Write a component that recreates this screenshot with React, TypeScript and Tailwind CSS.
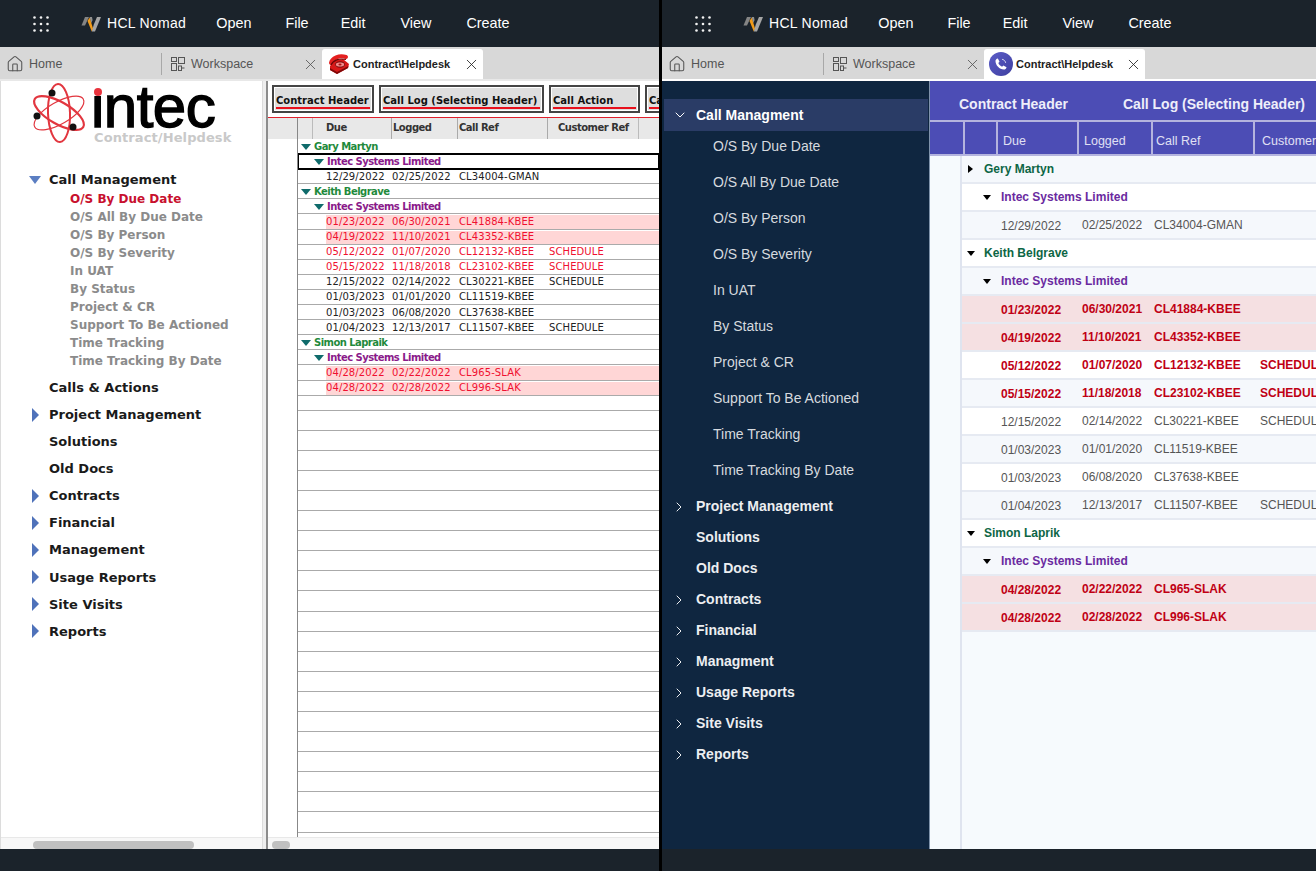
import React from 'react';
import { ChevronDown, ChevronRight, House, X } from 'lucide-react';

const leftItems = [
  { label: 'Call Management', open: true },
  { label: 'Calls & Actions' },
  { label: 'Project Management', arrow: true },
  { label: 'Solutions' },
  { label: 'Old Docs' },
  { label: 'Contracts', arrow: true },
  { label: 'Financial', arrow: true },
  { label: 'Management', arrow: true },
  { label: 'Usage Reports', arrow: true },
  { label: 'Site Visits', arrow: true },
  { label: 'Reports', arrow: true },
];

const subItems = [
  'O/S By Due Date',
  'O/S All By Due Date',
  'O/S By Person',
  'O/S By Severity',
  'In UAT',
  'By Status',
  'Project & CR',
  'Support To Be Actioned',
  'Time Tracking',
  'Time Tracking By Date',
];

const rightItems = [
  { label: 'Project Management', arrow: true },
  { label: 'Solutions' },
  { label: 'Old Docs' },
  { label: 'Contracts', arrow: true },
  { label: 'Financial', arrow: true },
  { label: 'Managment', arrow: true },
  { label: 'Usage Reports', arrow: true },
  { label: 'Site Visits', arrow: true },
  { label: 'Reports', arrow: true },
];

type Row = { kind: 'person' | 'company' | 'call'; text?: string; due?: string; logged?: string; ref?: string; cust?: string; red?: boolean; pink?: boolean };

const rows = (p1: string, p3: string): Row[] => [
  { kind: 'person', text: p1 },
  { kind: 'company', text: 'Intec Systems Limited' },
  { kind: 'call', due: '12/29/2022', logged: '02/25/2022', ref: 'CL34004-GMAN' },
  { kind: 'person', text: 'Keith Belgrave' },
  { kind: 'company', text: 'Intec Systems Limited' },
  { kind: 'call', due: '01/23/2022', logged: '06/30/2021', ref: 'CL41884-KBEE', red: true, pink: true },
  { kind: 'call', due: '04/19/2022', logged: '11/10/2021', ref: 'CL43352-KBEE', red: true, pink: true },
  { kind: 'call', due: '05/12/2022', logged: '01/07/2020', ref: 'CL12132-KBEE', cust: 'SCHEDULE', red: true },
  { kind: 'call', due: '05/15/2022', logged: '11/18/2018', ref: 'CL23102-KBEE', cust: 'SCHEDULE', red: true },
  { kind: 'call', due: '12/15/2022', logged: '02/14/2022', ref: 'CL30221-KBEE', cust: 'SCHEDULE' },
  { kind: 'call', due: '01/03/2023', logged: '01/01/2020', ref: 'CL11519-KBEE' },
  { kind: 'call', due: '01/03/2023', logged: '06/08/2020', ref: 'CL37638-KBEE' },
  { kind: 'call', due: '01/04/2023', logged: '12/13/2017', ref: 'CL11507-KBEE', cust: 'SCHEDULE' },
  { kind: 'person', text: p3 },
  { kind: 'company', text: 'Intec Systems Limited' },
  { kind: 'call', due: '04/28/2022', logged: '02/22/2022', ref: 'CL965-SLAK', red: true, pink: true },
  { kind: 'call', due: '04/28/2022', logged: '02/28/2022', ref: 'CL996-SLAK', red: true, pink: true },
];

const GridDots = () => (
  <svg width="16" height="16" viewBox="0 0 16 16" className="shrink-0" fill="#f2f2f2">
    {[1.5, 8, 14.5].flatMap((y) =>
      [1.5, 8, 14.5].map((x) => <circle key={`${x}-${y}`} cx={x} cy={y} r="1.3" />)
    )}
  </svg>
);

const NomadLogo = () => (
  <svg width="20" height="16" viewBox="0 0 20 16" className="shrink-0">
    <path d="M0.5 9.5 L4 1 H8 L4 9.5 Z" fill="#858585" />
    <path d="M8.6 1 H11 L11.6 4 L10 7.5 Z" fill="#8f8f8f" />
    <path d="M6.5 5 L8.6 1.5 L12.2 13 L10.8 15.5 Z" fill="#f29b18" />
    <path d="M10.8 15.5 H14 L20 1 H16 L12.8 8.5 Z" fill="#a5a5a5" />
  </svg>
);

const WorkspaceIcon = () => (
  <svg width="14" height="14" viewBox="0 0 14 14" fill="none" stroke="#555" strokeWidth="1" className="shrink-0">
    <rect x="0.5" y="0.5" width="5" height="4" />
    <rect x="7.5" y="0.5" width="6" height="6" />
    <rect x="0.5" y="6.5" width="5" height="7" />
    <rect x="7.5" y="9" width="3" height="4.5" />
    <path d="M10.5 11 H13.5" />
  </svg>
);

const TopBar = () => (
  <div className="flex h-[47px] shrink-0 items-center bg-[#1b232b] pl-[33px] text-[14.4px] text-white">
    <GridDots />
    <div className="ml-[32px] flex items-center gap-[6px]">
      <NomadLogo />
      <span className="text-[14px] tracking-[0.3px]">HCL Nomad</span>
    </div>
    <span className="ml-[30px]">Open</span>
    <span className="ml-[34px]">File</span>
    <span className="ml-[32px]">Edit</span>
    <span className="ml-[35px]">View</span>
    <span className="ml-[35px]">Create</span>
  </div>
);

const TabStrip = ({ icon, border }: { icon: React.ReactNode; border: string }) => (
  <div className={`flex h-[34px] shrink-0 items-start border-b-2 bg-[#d8d8d8] pt-[2px] text-[12.5px] text-[#555] ${border}`}>
    <div className="flex h-[30px] w-[161px] items-center gap-[5px] pl-[6px]">
      <House size={18} strokeWidth={1.4} />
      <span>Home</span>
    </div>
    <span className="mt-[4px] h-[22px] w-px bg-[#a8a8a8]" />
    <div className="flex h-[30px] w-[160px] items-center pl-[9px]">
      <WorkspaceIcon />
      <span className="ml-[6px]">Workspace</span>
      <X size={17} strokeWidth={1.2} className="ml-auto mr-[3px]" />
    </div>
    <div className="flex h-[30px] w-[161px] items-center rounded-t-[3px] bg-white pl-[4px] text-[11px] text-[#222]">
      {icon}
      <span className="ml-[3px] font-bold">Contract\Helpdesk</span>
      <X size={17} strokeWidth={1.2} className="ml-auto mr-[3px]" />
    </div>
  </div>
);

const RedPhone = () => (
  <svg width="24" height="22" viewBox="0 0 24 22" className="shrink-0">
    <path d="M4 13 L9 7 L17 6 L23 11 L22 15 L11 21 L4 17 Z" fill="#d81818" />
    <path d="M4 15 L11 19 L22.5 13 L22 15 L11 21 L4 17 Z" fill="#7d0808" />
    <path d="M5 10 C6 5 13 2 20 4" fill="none" stroke="#e42020" strokeWidth="4" strokeLinecap="round" />
    <path d="M5 12 C7 7 13 5 20 6.5" fill="none" stroke="#6a0606" strokeWidth="1.2" />
    <ellipse cx="14" cy="11.5" rx="4.5" ry="2.6" fill="#f48c8c" stroke="#6a0606" strokeWidth="0.9" />
    <ellipse cx="14" cy="11.5" rx="1.6" ry="0.9" fill="#b01010" />
  </svg>
);

const BluePhone = () => (
  <span className="ml-[1px] flex h-[24px] w-[24px] shrink-0 items-center justify-center rounded-full bg-gradient-to-br from-[#5b5cc8] to-[#3f40a0]">
    <svg width="14" height="14" viewBox="0 0 24 24" fill="white">
      <path d="M6.6 2.5 L9.5 8 L7.4 10.2 C8.5 12.8 11.2 15.5 13.8 16.6 L16 14.5 L21.5 17.4 C21 20 19 21.5 17 21.5 C9 21 3 15 2.5 7 C2.5 5 4 3 6.6 2.5 Z" />
      <path d="M14 4 C17 4.5 19.5 7 20 10" fill="none" stroke="white" strokeWidth="1.4" />
    </svg>
  </span>
);

const IntecLogo = () => (
  <div className="relative h-[66px] w-full">
    <svg width="56" height="62" viewBox="0 0 56 62" className="absolute left-[30px] top-[0px]">
      <g fill="none" stroke="#e2363f">
        <ellipse cx="28" cy="31" rx="28" ry="11" strokeWidth="2.2" transform="rotate(30 28 31)" />
        <ellipse cx="28" cy="31" rx="28" ry="11" strokeWidth="1.2" transform="rotate(-30 28 31)" />
        <ellipse cx="28" cy="31" rx="29" ry="11" strokeWidth="2" transform="rotate(88 28 31)" />
      </g>
      <circle cx="21" cy="11" r="3.5" fill="#111" />
      <circle cx="6" cy="34" r="3.5" fill="#111" />
      <circle cx="42" cy="45" r="3.5" fill="#111" />
    </svg>
    <span className="absolute left-[90px] top-[3px] font-['Liberation_Sans',sans-serif] text-[60px] leading-[44px] tracking-[-0.5px] text-black [-webkit-text-stroke:1.4px_black]">intec</span>
    <span className="absolute left-[91px] top-[1px] h-[13px] w-[12px] bg-white" />
    <span className="absolute left-[93px] top-[6px] h-[8px] w-[8px] rounded-full bg-[#e8323c]" />
    <span className="absolute left-[93px] top-[48px] font-['DejaVu_Sans',sans-serif] text-[13px] font-bold leading-[16px] tracking-[0.1px] text-[#c9c9c9]">Contract/Helpdesk</span>
  </div>
);

const LeftPane = () => (
  <div className="flex w-[659px] shrink-0 flex-col overflow-hidden font-['Liberation_Sans',sans-serif]">
    <TopBar />
    <TabStrip icon={<RedPhone />} border="border-[#e8e8e8]" />
    <div className="flex min-h-0 flex-1 bg-white font-['DejaVu_Sans',sans-serif]">
      <div className="flex w-[263px] shrink-0 flex-col border-x border-[#dcdcdc]">
        <div className="flex-1 pt-[1px]">
          <IntecLogo />
          <div className="mt-[18px] pl-[28px]">
            {leftItems.map((it) => (
              <div key={it.label}>
                <div className="flex h-[27.1px] items-center text-[13px] font-bold text-[#1a1a1a]">
                  <span className="flex w-[20px] items-center">
                    {it.open && <span className="h-0 w-0 border-x-[6px] border-t-[8px] border-x-transparent border-t-[#5b7ec2]" />}
                    {it.arrow && <span className="ml-[3px] h-0 w-0 border-y-[7px] border-l-[7px] border-y-transparent border-l-[#4f72ba]" />}
                  </span>
                  <span>{it.label}</span>
                </div>
                {it.open && (
                  <div className="mt-[-3px] mb-[4px] pl-[41px]">
                    {subItems.map((s, i) => (
                      <div key={s} className={`flex h-[18px] items-center text-[12px] font-bold ${i === 0 ? 'text-[#c8102e]' : 'text-[#8b8b8b]'}`}>{s}</div>
                    ))}
                  </div>
                )}
              </div>
            ))}
          </div>
        </div>
        <div className="h-[12px] shrink-0 border-t border-[#e8e8e8] bg-[#f7f7f7] pl-[32px]">
          <div className="mt-[3px] h-[8px] w-[161px] rounded-full bg-[#c0c0c0]" />
        </div>
      </div>
      <div className="w-[5px] shrink-0 border-r-2 border-[#8c8c8c] bg-[#eeeeee]" />
      <div className="flex min-w-0 flex-1 flex-col overflow-hidden">
        <div className="flex h-[37px] shrink-0 items-start gap-[5px] border-b border-[#e0202c] pl-[4px] pt-[4px]">
          {[
            ['Contract Header', 'w-[102px]'],
            ['Call Log (Selecting Header)', 'w-[165px]'],
            ['Call Action', 'w-[91px]'],
            ['Call', 'w-[40px]'],
          ].map(([t, w]) => (
            <div key={t} className={`flex h-[28px] shrink-0 flex-col overflow-hidden border-2 border-[#444] bg-[#dedede] px-[2px] pt-[8px] text-[10px] font-bold leading-[12px] text-[#111] shadow-[inset_0_0_0_1px_#fff] ${w}`}>
              <span className="whitespace-nowrap">{t}</span>
              <span className="h-[2px] w-full shrink-0 bg-[#e8101c]" />
            </div>
          ))}
        </div>
        <div className="flex h-[21px] shrink-0 items-center bg-[#e8e8e8] text-[10px] font-bold tracking-[-0.5px] text-[#333]">
          <span className="h-full w-[30px] shrink-0 border-r border-[#888]" />
          <span className="h-full w-[15px] shrink-0 border-r border-[#bbb]" />
          <span className="flex h-full w-[79px] shrink-0 items-center border-r border-[#aaa] pb-[2px] pl-[13px]">Due</span>
          <span className="flex h-full w-[66px] shrink-0 items-center border-r border-[#aaa] pb-[2px] pl-[1px]">Logged</span>
          <span className="flex h-full w-[90px] shrink-0 items-center border-r border-[#aaa] pb-[2px] pl-[1px]">Call Ref</span>
          <span className="flex h-full w-[91px] shrink-0 items-center border-r border-[#bbb] pb-[2px] pl-[10px]">Customer Ref</span>
        </div>
        <div className="flex min-h-0 flex-1">
          <div className="w-[30px] shrink-0 border-r border-[#888]" />
          <div className="min-w-0 flex-1 overflow-hidden">
            {rows('Gary Martyn', 'Simon Lapraik').map((r, i) => (
              <div key={i} className={`flex h-[15.1px] items-center whitespace-nowrap border-b border-[#aaaaaa] pt-[1px] text-[10px] leading-none ${i === 1 ? 'outline-2 -outline-offset-1 outline-black' : ''}`}>
                {r.kind === 'person' && (
                  <>
                    <span className="ml-[3px] h-0 w-0 border-x-[5px] border-t-[6px] border-x-transparent border-t-[#0f6b6b]" />
                    <span className="ml-[3px] font-bold tracking-[-0.55px] text-[#1f8a3c]">{r.text}</span>
                  </>
                )}
                {r.kind === 'company' && (
                  <>
                    <span className="ml-[16px] h-0 w-0 border-x-[5px] border-t-[6px] border-x-transparent border-t-[#0f6b6b]" />
                    <span className="ml-[3px] font-bold tracking-[-0.55px] text-[#8a1a8a]">{r.text}</span>
                  </>
                )}
                {r.kind === 'call' && (
                  <div className={`ml-[28px] flex h-full flex-1 items-center tracking-[0.1px] ${r.pink ? 'bg-[#ffd6d6]' : ''} ${r.red ? 'text-[#f01030]' : 'text-[#222]'}`}>
                    <span className="w-[66px]">{r.due}</span>
                    <span className="w-[67px]">{r.logged}</span>
                    <span className="w-[90px]">{r.ref}</span>
                    <span>{r.cust}</span>
                  </div>
                )}
              </div>
            ))}
            <div className="h-[15px] border-b border-[#aaaaaa]" />
            {Array.from({ length: 21 }).map((_, i) => (
              <div key={i} className="h-[20.1px] border-b border-[#aaaaaa]" />
            ))}
          </div>
        </div>
        <div className="h-[12px] shrink-0 border-t border-[#e8e8e8] bg-[#f7f7f7] pl-[4px]">
          <div className="mt-[3px] h-[8px] w-[18px] rounded-full bg-[#c0c0c0]" />
        </div>
      </div>
    </div>
    <div className="h-[22px] shrink-0 bg-[#1b232b]" />
  </div>
);

const RightPane = () => (
  <div className="flex min-w-0 flex-1 flex-col overflow-hidden font-['Liberation_Sans',sans-serif]">
    <TopBar />
    <TabStrip icon={<BluePhone />} border="border-white" />
    <div className="flex min-h-0 flex-1 bg-[#f6fafd]">
      <div className="w-[268px] shrink-0 border-r border-[#7f93ab] bg-[#0f2640] pl-[2px] pr-[1px] pt-[18px] text-[#e8e8e8]">
        <div className="flex h-[32px] items-center bg-[#2a3c66] pl-[8px] text-[14px] font-bold text-white">
          <ChevronDown size={16} strokeWidth={1.5} />
          <span className="ml-[8px]">Call Managment</span>
        </div>
        <div className="-mt-[3px] mb-[3px] pl-[49px]">
          {subItems.map((s) => (
            <div key={s} className="flex h-[36px] items-center text-[14px] text-[#d6dadf]">{s}</div>
          ))}
        </div>
        {rightItems.map((it) => (
          <div key={it.label} className="flex h-[31px] items-center text-[14px] font-bold text-[#eceef1]">
            <span className="flex w-[32px] justify-center pr-[3px]">
              {it.arrow && <ChevronRight size={16} strokeWidth={1.5} />}
            </span>
            <span>{it.label}</span>
          </div>
        ))}
      </div>
      <div className="flex min-w-0 flex-1 flex-col overflow-hidden">
        <div className="flex h-[41px] shrink-0 items-center border-b-2 border-[#b4b4de] bg-[#4c4db5] pt-[8px] text-[14px] font-bold text-[#eeeefa]">
          <span className="ml-[29px] w-[164px] shrink-0">Contract Header</span>
          <span className="whitespace-nowrap">Call Log (Selecting Header)</span>
        </div>
        <div className="flex h-[34px] shrink-0 items-center border-b-2 border-[#b4b4de] bg-[#4c4db5] text-[12.5px] text-[#e0e0f4]">
          <span className="h-full w-[35px] shrink-0 border-r-2 border-[#b4b4de]" />
          <span className="h-full w-[33px] shrink-0 border-r-2 border-[#b4b4de]" />
          <span className="flex h-full w-[81px] shrink-0 items-center border-r-2 border-[#b4b4de] pl-[5px] pt-[7px]">Due</span>
          <span className="flex h-full w-[74px] shrink-0 items-center border-r-2 border-[#b4b4de] pl-[5px] pt-[7px]">Logged</span>
          <span className="flex h-full w-[102px] shrink-0 items-center border-r-2 border-[#b4b4de] pl-[3px] pt-[7px]">Call Ref</span>
          <span className="flex h-full items-center whitespace-nowrap pl-[7px] pt-[7px]">Customer Ref</span>
        </div>
        <div className="flex min-h-0 flex-1">
          <div className="w-[32px] shrink-0 border-r-2 border-[#dfe4ef]" />
          <div className="min-w-0 flex-1 overflow-hidden">
            {rows('Gery Martyn', 'Simon Laprik').map((r, i) => (
              <div key={i} className={`flex h-[28px] items-center whitespace-nowrap border-b-2 border-[#e6eaf2] text-[12px] ${r.pink ? 'bg-[#f5e0e2]' : i % 2 === 0 ? 'bg-[#f5f8fc]' : 'bg-white'}`}>
                {r.kind === 'person' && (
                  <>
                    <span className="flex w-[20px] shrink-0 pl-[5px]">
                      <span className={`h-0 w-0 ${i === 0 ? 'ml-[1px] border-y-[4px] border-l-[5px] border-y-transparent border-l-black' : 'border-x-[4px] border-t-[5px] border-x-transparent border-t-black'}`} />
                    </span>
                    <span className="ml-[2px] font-bold text-[#0d6645]">{r.text}</span>
                  </>
                )}
                {r.kind === 'company' && (
                  <>
                    <span className="ml-[21px] h-0 w-0 border-x-[4px] border-t-[5px] border-x-transparent border-t-black" />
                    <span className="ml-[10px] font-bold text-[#6a2aa0]">{r.text}</span>
                  </>
                )}
                {r.kind === 'call' && (
                  <div className={`flex items-center pl-[39px] ${r.red ? 'font-bold text-[#c00014]' : 'text-[#555]'}`}>
                    <span className="w-[81px] translate-y-[1px]">{r.due}</span>
                    <span className="w-[72px]">{r.logged}</span>
                    <span className="w-[106px]">{r.ref}</span>
                    <span>{r.cust}</span>
                  </div>
                )}
              </div>
            ))}
          </div>
        </div>
      </div>
    </div>
    <div className="h-[22px] shrink-0 bg-[#1b232b]" />
  </div>
);

export default function App() {
  return (
    <div className="flex h-[871px] w-[1316px] gap-[3px] overflow-hidden bg-black">
      <LeftPane />
      <RightPane />
    </div>
  );
}
